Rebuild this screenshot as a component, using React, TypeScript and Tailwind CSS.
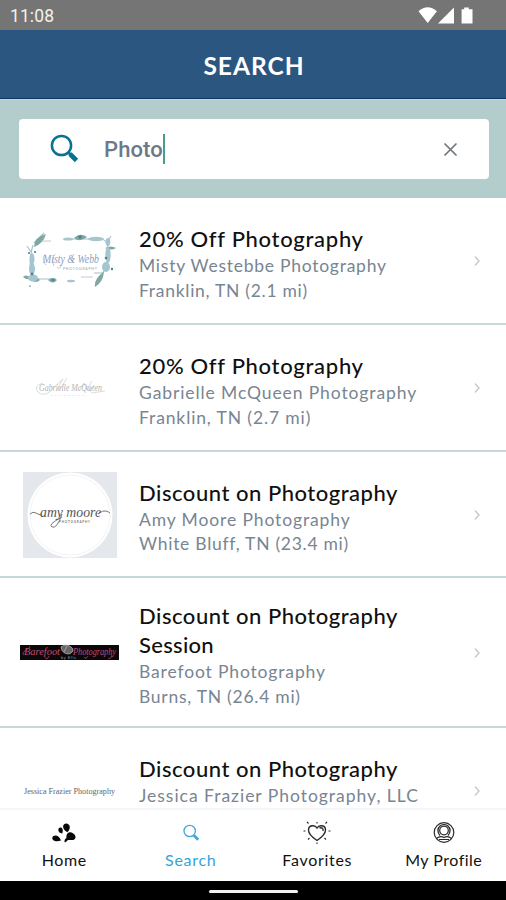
import type { ReactNode } from "react";

function StatusBar() {
  return (
    <div className="flex h-[30px] shrink-0 items-center justify-between bg-[#757575] pl-[10px] pr-[32px] text-white">
      <span className="pt-[3px] font-[Roboto,sans-serif] text-[17.5px] leading-none tracking-[0.1px] text-[#f1f1f1]">11:08</span>
      <svg className="h-[18px] w-[56px]" viewBox="0 0 56 18" fill="#fff">
        <path d="M0.500 5.200Q9.700-2.600 18.900 5.200L9.700 17z" />
        <path d="M20 17.500H36V1.500z" />
        <path d="M43.600 3.200h2.600V1.500h4.600v1.700H54.500v14.300H43.600z" />
      </svg>
    </div>
  );
}

function MistyLogo() {
  return (
    <svg className="h-[64px] w-[100px]" viewBox="0 0 100 64">
      <g fill="none" stroke="#8fb2ba" strokeWidth="1.100" opacity=".8">
        <path d="M13 16Q8 32 12 50H36" />
        <path d="M44 10H77Q88 8 88 22T83 44H74" />
        <path d="M14 14 24 4M11 23 7 17M83 43 75 57M87 13 91 7" />
      </g>
      <g fill="#7fa8a0">
        <path d="M14 18Q14 8 26 5 23 15 14 18zM10 48Q5 45 3 48 6 51 11 50zM75 58Q74 49 84 43 83 53 75 58zM54 9Q60 3 67 8 60 14 54 9zM85 19Q91 16 96 19 91 22 85 19z" />
        <path d="M11 51Q16 46 20 51 16 55 11 51zM28 51Q33 47 37 51 33 56 28 51z" />
      </g>
      <g fill="#a5c5d0">
        <ellipse cx="12" cy="30" rx="2.500" ry="6" /><ellipse cx="12" cy="40" rx="3" ry="6" />
        <ellipse cx="13" cy="49" rx="5" ry="3.500" /><ellipse cx="48" cy="10" rx="5" ry="1.600" />
        <ellipse cx="76" cy="10" rx="8" ry="2.200" /><ellipse cx="88" cy="26" rx="2.700" ry="8" />
        <ellipse cx="86" cy="38" rx="4" ry="5" /><ellipse cx="51" cy="52" rx="4" ry="1.300" />
        <ellipse cx="88" cy="13" rx="2.300" ry="4" />
      </g>
      <g fill="#4e8290">
        <circle cx="9" cy="24" r="1" /><circle cx="15" cy="23" r="1.100" /><circle cx="10" cy="57" r=".8" /><circle cx="12" cy="45" r="1.400" />
        <circle cx="60" cy="8" r="1.800" /><circle cx="86" cy="29" r="1.300" /><circle cx="92" cy="40" r="1.200" /><circle cx="33" cy="51" r="1.300" />
      </g>
      <path d="M21 12H31M61 48H73M25 25Q21 31 26 36M35 25Q31 31 34 37M42 34Q40 42 37 38M54 25Q50 31 54 34" fill="none" stroke="#aebcc9" strokeWidth=".8" />
      <text x="23" y="34" textLength="56" lengthAdjust="spacingAndGlyphs" fontFamily="Liberation Serif" fontStyle="italic" fontSize="13" fill="#8ea2c0">Misty &amp; Webb</text>
      <text x="43" y="40.500" textLength="34" fontFamily="Lato" fontSize="3.500" fill="#999ba4">PHOTOGRAPHY</text>
    </svg>
  );
}

function GabrielleLogo() {
  return (
    <svg className="h-[30px] w-[100px]" viewBox="0 0 100 30">
      <path d="M23 10Q13 13 18 19 23 24 31 18M31 17 43 6 36 18M47 5 39 18M59 18 64 10 67 17 72 8M75 12Q67 17 72 20L85 18" fill="none" stroke="#d2d2d2" strokeWidth=".8" />
      <text x="19" y="18" textLength="63" lengthAdjust="spacingAndGlyphs" fontFamily="Liberation Serif" fontStyle="italic" fontSize="10.500" fill="#b5b5b5">Gabrielle McQueen</text>
      <text x="31" y="22.500" textLength="36" fontFamily="Lato" fontSize="2.500" fill="#c6c6c6">PHOTOGRAPHY</text>
    </svg>
  );
}

function AmyLogo() {
  return (
    <svg className="h-[86px] w-[94px]" viewBox="0 0 94 86">
      <path fill="#e4e7eb" d="M0 0H94V86H0z" />
      <circle cx="47" cy="43" r="42.500" fill="#fff" />
      <circle cx="47" cy="43" r="40" fill="none" stroke="#f4f4f5" />
      <path d="M7 42Q10 39 13 41T19 43M75 42Q80 38 83 39T87 41M39 42Q34 57 29 55T39 45" fill="none" stroke="#777" strokeWidth="1" />
      <text x="17" y="45" textLength="61" lengthAdjust="spacingAndGlyphs" fontFamily="Liberation Serif" fontStyle="italic" fontSize="15" fill="#555">amy moore</text>
      <text x="36" y="51" textLength="31" fontFamily="Lato" fontWeight="700" fontSize="3" fill="#777">PHOTOGRAPHY</text>
    </svg>
  );
}

function BarefootLogo() {
  return (
    <svg className="h-[17px] w-[99px]" viewBox="0 0 99 17">
      <path fill="#0c080a" d="M0 1H99V16H0z" />
      <path d="M41 3Q46-1 51 3T49 10Q42 10 41 3M47 2 44 8" fill="#666" stroke="#b3b3b3" strokeWidth=".8" />
      <path d="M4 11Q1 9 6 6T10 2M29 12Q27 17 25 13M68 12Q66 16 64 13M92 11Q91 16 88 14" fill="none" stroke="#a84066" strokeWidth=".8" />
      <text x="4" y="11" textLength="36" lengthAdjust="spacingAndGlyphs" fontFamily="Liberation Serif" fontStyle="italic" fontSize="11" fill="#c14b76">Barefoot</text>
      <text x="53" y="11" textLength="43" lengthAdjust="spacingAndGlyphs" fontFamily="Liberation Serif" fontStyle="italic" fontSize="11" fill="#c14b76">Photography</text>
      <text x="41" y="15" textLength="15" fontFamily="Lato" fontSize="3.500" fill="#aaa">by Elle</text>
    </svg>
  );
}

function JessicaLogo() {
  return (
    <svg className="h-[16px] w-[94px]" viewBox="0 0 94 16">
      <text x="1" y="10.500" textLength="91" lengthAdjust="spacingAndGlyphs" fontFamily="Liberation Serif" fontSize="9" fill="#666">Jessica Frazier Photography</text>
    </svg>
  );
}

interface Line {
  text: string;
  tracking: string;
}

interface ResultProps {
  logo: ReactNode;
  title: Line[];
  details: Line[];
  height: string;
}

const results: ResultProps[] = [
  {
    logo: <MistyLogo />, height: "h-[127px]",
    title: [{ text: "20% Off Photography", tracking: "tracking-[0.7px]" }],
    details: [
      { text: "Misty Westebbe Photography", tracking: "tracking-[0.75px]" },
      { text: "Franklin, TN (2.1 mi)", tracking: "tracking-[0.72px]" },
    ],
  },
  {
    logo: <GabrielleLogo />, height: "h-[127px]",
    title: [{ text: "20% Off Photography", tracking: "tracking-[0.7px]" }],
    details: [
      { text: "Gabrielle McQueen Photography", tracking: "tracking-[0.9px]" },
      { text: "Franklin, TN (2.7 mi)", tracking: "tracking-[0.88px]" },
    ],
  },
  {
    logo: <AmyLogo />, height: "h-[126px]",
    title: [{ text: "Discount on Photography", tracking: "tracking-[0.52px]" }],
    details: [
      { text: "Amy Moore Photography", tracking: "tracking-[0.88px]" },
      { text: "White Bluff, TN (23.4 mi)", tracking: "tracking-[0.72px]" },
    ],
  },
  {
    logo: <BarefootLogo />, height: "h-[150px]",
    title: [
      { text: "Discount on Photography", tracking: "tracking-[0.52px]" },
      { text: "Session", tracking: "tracking-[0.3px]" },
    ],
    details: [
      { text: "Barefoot Photography", tracking: "tracking-[0.85px]" },
      { text: "Burns, TN (26.4 mi)", tracking: "tracking-[0.74px]" },
    ],
  },
  {
    logo: <JessicaLogo />, height: "h-[127px]",
    title: [{ text: "Discount on Photography", tracking: "tracking-[0.52px]" }],
    details: [
      { text: "Jessica Frazier Photography, LLC", tracking: "tracking-[0.98px]" },
    ],
  },
];

function Result({ logo, title, details, height }: ResultProps) {
  return (
    <li className={`flex shrink-0 items-center border-b-2 border-[#c5d8da] ${height}`}>
      <div className="flex w-[139px] shrink-0 justify-center pt-[1px]">{logo}</div>
      <div className="min-h-[85px] flex-1 whitespace-nowrap pt-[6px]">
        <h2 className="pb-[1px] text-[22px] font-medium leading-[29px] text-[#101010]">
          {title.map((line) => (
            <span key={line.text} className={`block w-max ${line.tracking}`}>{line.text}</span>
          ))}
        </h2>
        {details.map((line) => (
          <p key={line.text} className={`w-max text-[17.5px] leading-[24.5px] text-[#788592] ${line.tracking}`}>{line.text}</p>
        ))}
      </div>
      <svg className="mr-[24px] mt-[1px] h-[12px] w-[10px] shrink-0" viewBox="0 0 10 12" fill="none" stroke="#c6c9cc" strokeWidth="1.4">
        <path d="M3 1.500 7 6l-4 4.500" />
      </svg>
    </li>
  );
}

function Tab({ label, icon, className }: { label: string; icon: ReactNode; className: string }) {
  return (
    <div className="flex flex-1 flex-col items-center pl-[2px] pt-[10px]">
      {icon}
      <span className={`mt-[1px] whitespace-nowrap text-[16px] leading-[22px] ${className}`}>{label}</span>
    </div>
  );
}

export default function App() {
  return (
    <div className="flex h-[900px] w-[506px] flex-col overflow-hidden bg-white font-[Lato,sans-serif]">
      <StatusBar />
      <header className="flex h-[69px] shrink-0 items-center justify-center border-b border-[#12386a] bg-[#2b567f] pl-[2px] pt-[5px]">
        <h1 className="text-[24.5px] font-bold leading-none tracking-[1px] text-white">SEARCH</h1>
      </header>
      <div className="h-[99px] shrink-0 border-t border-[#c2d2de] bg-[#b3cdcc] pl-[19px] pr-[17px] pt-[19px]">
        <div className="flex h-[60px] items-center rounded-[4px] bg-white pl-[31px] pr-[31px]">
          <svg className="h-[30px] w-[30px]" viewBox="0 0 30 30" fill="none" stroke="#08738f">
            <circle cx="11.500" cy="11.500" r="9.600" strokeWidth="2.500" />
            <path d="m18.500 18.500 2 2" strokeWidth="3" />
            <path d="m20 20 6.500 6.500" strokeWidth="4.600" />
          </svg>
          <span className="ml-[24px] font-[Roboto,sans-serif] text-[22px] font-medium tracking-[0.1px] text-[#6c7988]">Photo</span>
          <span className="h-[30px] w-[2px] bg-[#4c9a88]" />
          <svg className="ml-auto h-[15px] w-[15px]" viewBox="0 0 15 15" fill="none" stroke="#707579" strokeWidth="1.7">
            <path d="m1.500 1.500 12 12M13.500 1.500l-12 12" />
          </svg>
        </div>
      </div>
      <ul className="flex min-h-0 flex-1 flex-col overflow-hidden">
        {results.map((result, index) => (
          <Result key={index} {...result} />
        ))}
      </ul>
      <nav className="flex h-[73px] shrink-0 border-t-2 border-[#f4f6f7] bg-white">
        <Tab label="Home" className="tracking-[0.6px] text-[#111]" icon={
          <svg className="h-[28px] w-[32px]" viewBox="0 0 32 28" fill="#080808">
            <path d="M19.300 12.300C14 9 14 4 17.800 3.400 22 3 23.500 8.500 19.300 12.300zM14.300 13.500C9.500 13 9.500 8 12 7.500 14.500 7.200 15.500 10 14.300 13.500zM13 20.500C8 22.500 4 20.500 4.300 17.700 5 14.500 11 14 13 20.500zM18.400 18C18 12.500 22 11.500 24.500 13 29 15.500 28 19.500 25 20 21.500 20.200 20 19 18.400 21.500 17.700 22.700 16.300 22.500 16.500 20.700 16.600 19.500 17.300 18.800 18.400 18z" />
          </svg>
        } />
        <Tab label="Search" className="tracking-[0.7px] text-[#35a4da]" icon={
          <svg className="h-[28px] w-[32px]" viewBox="0 0 32 28" fill="none" stroke="#43a6d8">
            <circle cx="14.700" cy="11" r="5.700" strokeWidth="1.300" />
            <path d="m18.800 15.300 4.400 4.400" strokeWidth="2.800" />
          </svg>
        } />
        <Tab label="Favorites" className="tracking-[0.7px] text-[#111]" icon={
          <svg className="h-[28px] w-[32px]" viewBox="0 0 32 28" fill="none" stroke="#292929">
            <path d="M16 20.500C10 16.500 7.500 13 7.500 10 7.500 5 14 4.500 16 8 18 4.500 24.500 5 24.500 10 24.500 13 22 16.500 16 20.500zM18.500 8C21 7 22.500 8.500 22 11" strokeWidth="1.400" />
            <path d="M16 2v1.500M6 2l1.500 1.500M26 2l-1.500 1.500M2.500 11h2M27.500 11h2M7 19.500l1.500-1.500M25 19.500l-1.500-1.500M16 22.500v1.500" strokeWidth="1.100" />
          </svg>
        } />
        <Tab label="My Profile" className="tracking-[0.5px] text-[#111]" icon={
          <svg className="h-[28px] w-[32px]" viewBox="0 0 32 28" fill="none" stroke="#292929" strokeWidth="1.200">
            <circle cx="16" cy="12.500" r="9.800" />
            <circle cx="16" cy="10.500" r="4.300" />
            <path d="M12.500 5.500Q7.500 10 12 15.500M19.500 5.500Q24.500 10 20 15.500M12.500 5.500Q16 3.500 19.500 5.500M8.500 18.500Q12 15.500 16 17.500 20 15.500 23.500 18.500M11 19.500h10" />
          </svg>
        } />
      </nav>
      <div className="flex h-[19px] shrink-0 justify-center bg-black pt-[9px]">
        <span className="h-[3px] w-[89px] rounded-full bg-[#f2f2f2]" />
      </div>
    </div>
  );
}
